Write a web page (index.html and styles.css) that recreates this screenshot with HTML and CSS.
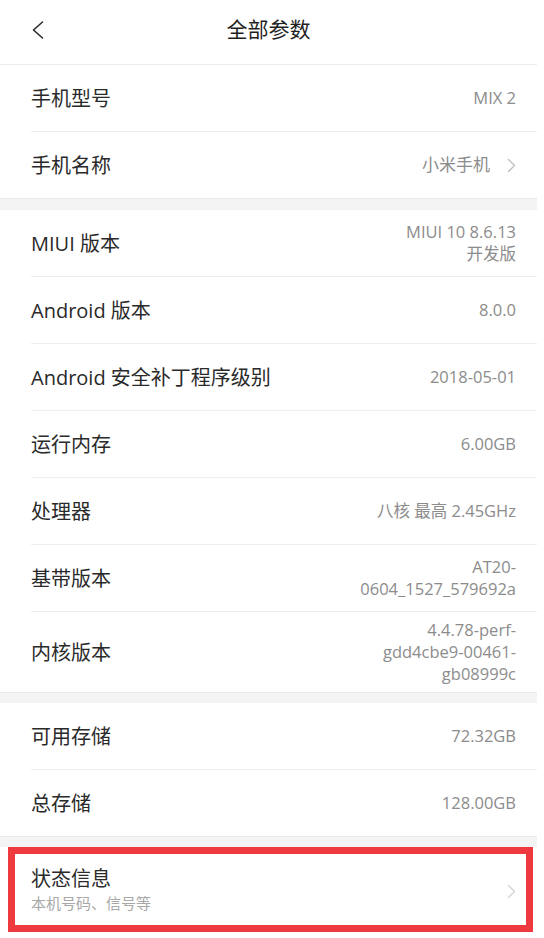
FILE: index.html
```html
<!DOCTYPE html>
<html lang="zh-CN">
<head>
<meta charset="utf-8">
<title>全部参数</title>
<link rel="stylesheet" href="styles.css">
</head>
<body>
<div class="page">
  <header class="header">
    <div class="back">
      <svg width="14" height="20" viewBox="0 0 14 20"><path d="M11.5 2 L2.5 10 L11.5 18" fill="none" stroke="#2a2a2a" stroke-width="1.6" stroke-linecap="round" stroke-linejoin="round"/></svg>
    </div>
    <h1 class="title">全部参数</h1>
    <div></div>
  </header>

  <section class="section">
    <div class="row"><span class="label">手机型号</span><span class="value">MIX 2</span></div>
    <div class="row row-last"><span class="label">手机名称</span><span class="value with-arrow">小米手机<svg class="arrow" width="9" height="15" viewBox="0 0 9 15"><path d="M1.5 1.5 L7.5 7.5 L1.5 13.5" fill="none" stroke="#bdbdbd" stroke-width="1.4" stroke-linecap="round" stroke-linejoin="round"/></svg></span></div>
  </section>

  <div class="band"></div>

  <section class="section">
    <div class="row"><span class="label">MIUI 版本</span><span class="value">MIUI 10 8.6.13<br>开发版</span></div>
    <div class="row"><span class="label">Android 版本</span><span class="value">8.0.0</span></div>
    <div class="row"><span class="label">Android 安全补丁程序级别</span><span class="value">2018-05-01</span></div>
    <div class="row"><span class="label">运行内存</span><span class="value">6.00GB</span></div>
    <div class="row"><span class="label">处理器</span><span class="value">八核 最高 2.45GHz</span></div>
    <div class="row"><span class="label">基带版本</span><span class="value">AT20-<br>0604_1527_579692a</span></div>
    <div class="row row-last row-tall"><span class="label">内核版本</span><span class="value">4.4.78-perf-<br>gdd4cbe9-00461-<br>gb08999c</span></div>
  </section>

  <div class="band band-thin"></div>

  <section class="section">
    <div class="row"><span class="label">可用存储</span><span class="value">72.32GB</span></div>
    <div class="row row-last"><span class="label">总存储</span><span class="value">128.00GB</span></div>
  </section>

  <div class="band band-thin"></div>

  <section class="section status">
    <div class="row row-last row-status">
      <span class="stack"><span class="label">状态信息</span><span class="sub">本机号码、信号等</span></span>
      <svg class="arrow arrow-faint" width="9" height="15" viewBox="0 0 9 15"><path d="M1.5 1.5 L7.5 7.5 L1.5 13.5" fill="none" stroke="#d4d4d4" stroke-width="1.4" stroke-linecap="round" stroke-linejoin="round"/></svg>
    </div>
    <div class="highlight"></div>
  </section>
</div>
</body>
</html>
```

FILE: styles.css
```css
html, body {
  margin: 0;
  padding: 0;
  background: #ffffff;
}
body {
  font-family: "Open Sans", "Noto Sans CJK SC", sans-serif;
  color: #2a2a2a;
}
.page {
  width: 537px;
  background: #ffffff;
}
.header {
  height: 64px;
  border-bottom: 1px solid #ececec;
  display: grid;
  grid-template-columns: 1fr auto 1fr;
  align-items: center;
}
.back {
  padding-left: 31px;
  display: flex;
  align-items: center;
  height: 20px;
  margin-top: -4px;
}
.title {
  margin: 0;
  font-size: 21px;
  font-weight: 400;
  color: #1f1f1f;
  margin-top: -6px;
  line-height: 28px;
}
.section {
  background: #ffffff;
}
.band {
  height: 11px;
  background: #f4f4f4;
  border-top: 1px solid #ebebeb;
}
.band-thin {
  height: 10px;
}
.row {
  height: 67px;
  box-sizing: border-box;
  margin-left: 31px;
  padding-right: 21px;
  border-bottom: 1px solid #eeeeee;
  display: flex;
  align-items: center;
  justify-content: space-between;
}
.row-last {
  border-bottom: none;
  height: 66px;
}
.row-tall {
  height: 80px;
}
.label {
  font-size: 20px;
  color: #2a2a2a;
  line-height: 26px;
  padding-top: 2px;
}
.value {
  font-size: 16.5px;
  color: #8c8c8c;
  text-align: right;
  line-height: 22px;
}
.with-arrow {
  display: flex;
  align-items: center;
  gap: 17px;
  font-size: 17px;
}
.arrow {
  display: block;
}
.status {
  position: relative;
}
.row-status {
  height: 85px;
  align-items: center;
}
.stack {
  display: flex;
  flex-direction: column;
  padding-top: 0;
}
.stack .label {
  line-height: 26px;
  padding-top: 0;
}
.sub {
  font-size: 15px;
  color: #a8a8a8;
  line-height: 22px;
}
.arrow-faint {
  margin-top: 4px;
}
.highlight {
  position: absolute;
  left: 8px;
  right: 4px;
  top: 0;
  height: 85px;
  box-sizing: border-box;
  border: 7px solid #ee3a3e;
  pointer-events: none;
}
```
